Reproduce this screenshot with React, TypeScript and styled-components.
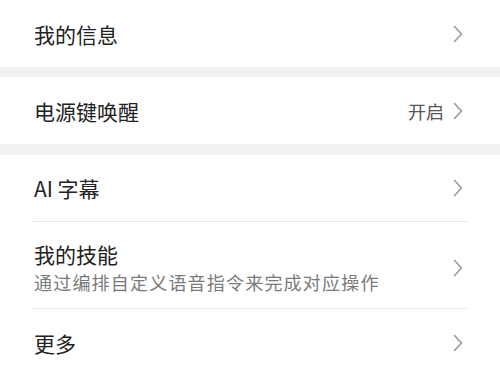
import React from 'react'
import { styled, createGlobalStyle } from 'styled-components'

const GlobalStyle = createGlobalStyle`
  html, body {
    margin: 0;
    padding: 0;
    background: #ffffff;
  }
  body {
    font-family: "Noto Sans CJK SC", "Noto Sans", sans-serif;
    width: 500px;
    overflow: hidden;
  }
`

type Item = {
  title: string
  desc?: string
  value?: string
}

const groups: Item[][] = [
  [{ title: '我的信息' }],
  [{ title: '电源键唤醒', value: '开启' }],
  [
    { title: 'AI 字幕' },
    { title: '我的技能', desc: '通过编排自定义语音指令来完成对应操作' },
    { title: '更多' },
  ],
]

function Chevron() {
  return (
    <svg width="12" height="18" viewBox="0 0 12 18" fill="none">
      <path d="M2.5 1.5 L9.5 9 L2.5 16.5" stroke="#9a9a9a" strokeWidth="1.6" strokeLinecap="round" strokeLinejoin="round" />
    </svg>
  )
}

function App() {
  return (
    <>
      <GlobalStyle />
      <Page>
        {groups.map((group, gi) => (
          <Group key={gi}>
            {group.map((item) => (
              <Row key={item.title} $tall={!!item.desc}>
                <TextBox>
                  <Title>{item.title}</Title>
                  {item.desc && <Desc>{item.desc}</Desc>}
                </TextBox>
                <Right>
                  {item.value && <Value>{item.value}</Value>}
                  <Chevron />
                </Right>
              </Row>
            ))}
          </Group>
        ))}
      </Page>
    </>
  )
}

const Page = styled.div`
  display: flex;
  flex-direction: column;
  background: #f1f1f1;
  gap: 10px;
  height: 375px;
`

const Group = styled.div`
  background: #ffffff;
  padding: 0 33px;
  display: flex;
  flex-direction: column;

  &:last-child {
    flex: 1;
    margin-top: 1px;
  }
`

const Row = styled.div<{ $tall: boolean }>`
  display: flex;
  align-items: center;
  justify-content: space-between;
  height: ${({ $tall }) => ($tall ? '87px' : '67px')};
  border-bottom: 1px solid #e6e6e6;
  box-sizing: border-box;
  padding: ${({ $tall }) => ($tall ? '5px 0 0' : '0')};

  &:last-child {
    border-bottom: none;
  }
`

const TextBox = styled.div`
  display: flex;
  flex-direction: column;
  padding-left: 1px;
`

const Title = styled.div`
  font-size: 21px;
  line-height: 28px;
  color: #222222;
`

const Desc = styled.div`
  font-size: 18px;
  letter-spacing: 1.2px;
  line-height: 28px;
  color: #7a7a7a;
`

const Right = styled.div`
  display: flex;
  align-items: center;
  gap: 8px;
  padding-right: 3px;
`

const Value = styled.span`
  font-size: 18px;
  color: #555555;
`

export default App
